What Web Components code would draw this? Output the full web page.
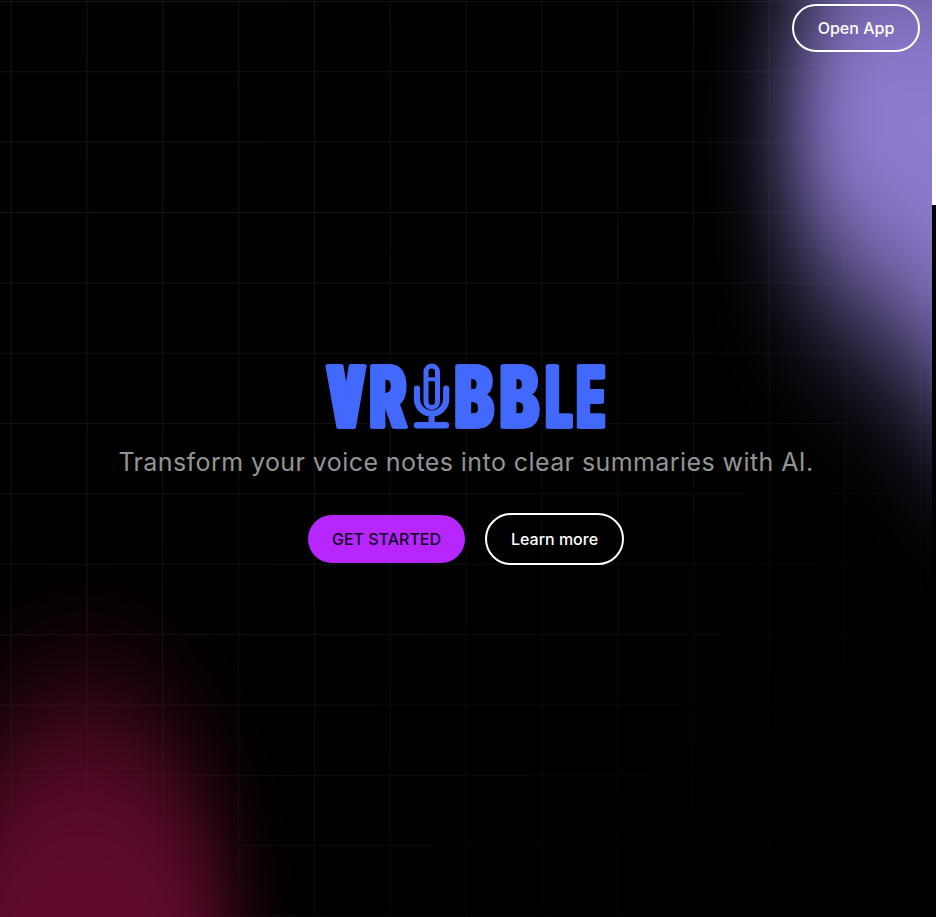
<!DOCTYPE html>
<html lang="en">
<head>
<meta charset="utf-8">
<title>Vribble</title>
<style>
html,body{margin:0;height:100%;background:#000;overflow:hidden}
body{font-family:Inter,"Liberation Sans",sans-serif;color:#fff}
</style>
</head>
<body>
<vribble-page></vribble-page>
<script>
const define=(name,html)=>customElements.define(name,class extends HTMLElement{
  constructor(){super();this.attachShadow({mode:"open"}).innerHTML=html;}
});

define("glow-backdrop",`
<style>:host{display:block;overflow:hidden}svg{display:block;width:100%;height:100%}</style>
<svg viewBox="0 0 932 917" preserveAspectRatio="none" aria-hidden="true">
  <defs>
    <pattern id="g" x="10.6" y="1" width="75.83" height="70.35" patternUnits="userSpaceOnUse">
      <path d="M.5 0V70.35M0 .5H75.83" stroke="#fff" stroke-opacity=".085" fill="none"/>
    </pattern>
    <linearGradient id="f" x1="0" y1="0" x2="932" y2="917" gradientUnits="userSpaceOnUse">
      <stop offset="0" stop-color="#fff"/><stop offset=".45" stop-color="#ccc"/><stop offset=".95" stop-color="#000"/>
    </linearGradient>
    <mask id="m" maskUnits="userSpaceOnUse" x="0" y="0" width="932" height="917"><rect width="932" height="917" fill="url(#f)"/></mask>
    <filter id="b1" filterUnits="userSpaceOnUse" x="500" y="-400" width="900" height="1400" color-interpolation-filters="sRGB"><feGaussianBlur stdDeviation="40 84"/></filter>
    <filter id="b2" filterUnits="userSpaceOnUse" x="-300" y="300" width="800" height="1300" color-interpolation-filters="sRGB"><feGaussianBlur stdDeviation="34 78"/></filter>
  </defs>
  <rect width="932" height="917" fill="#000"/>
  <rect width="932" height="917" fill="url(#g)" mask="url(#m)"/>
  <path d="M825-50L786 40L786 200Q796 260 850 298Q915 330 955 420L1060 460V-80H825Z" fill="#8e7bd0" filter="url(#b1)"/>
  <ellipse cx="84" cy="975" rx="152" ry="268" fill="#600a2b" filter="url(#b2)"/>
</svg>`);

define("vribble-logo",`
<style>:host{display:block;width:284px;height:68px}svg{display:block;margin-top:-22px;overflow:visible}text{font:800 84px Inter,"Liberation Sans",sans-serif;stroke-width:3;stroke-linejoin:round}</style>
<svg width="284" height="112" viewBox="0 -22 284 112" fill="#4269fb" stroke="#4269fb" role="img" aria-label="Vribble">
  <filter id="wide" filterUnits="userSpaceOnUse" x="-10" y="-22" width="304" height="112" color-interpolation-filters="sRGB">
    <feOffset in="SourceGraphic" dx="-2" result="a"/><feOffset in="SourceGraphic" dx="-1" result="b"/>
    <feOffset in="SourceGraphic" dx="1" result="c"/><feOffset in="SourceGraphic" dx="2" result="d"/>
    <feMerge><feMergeNode in="a"/><feMergeNode in="b"/><feMergeNode in="SourceGraphic"/><feMergeNode in="c"/><feMergeNode in="d"/></feMerge>
  </filter>
  <g filter="url(#wide)">
    <g filter="url(#wide)"><text transform="translate(5.3 64) scale(.52 1)">V</text></g>
    <text transform="translate(46 64) scale(.645 1)">R</text>
    <text transform="translate(131 64) scale(.685 1)" x="0 66">BB</text>
    <text transform="translate(222 64) scale(.54 1)" x="0 57.4">LE</text>
  </g>
  <g fill="none" stroke-width="5" stroke-linecap="round">
    <rect x="102" y="3" width="11.5" height="41.5" rx="5.75"/>
    <path d="M93 25.5V36A14.6 14.6 0 0 0 122.2 36V25.5M107.6 51V61" stroke-width="6.2"/>
    <path d="M93.2 62.2H121.8" stroke-width="6.6"/>
    <path d="M103 16.3H112" stroke-width="4"/>
  </g>
</svg>`);

define("pill-button",`
<style>
:host{display:block}
button{box-sizing:border-box;display:block;width:var(--w);height:var(--h);padding:0;border:2px solid #fff;border-radius:26px;background:transparent;color:#fff;font:500 16px/24px Inter,"Liberation Sans",sans-serif}
:host([filled]) button{border:0;background:#b725ff;color:#10031b}
</style><button><slot></slot></button>`);

define("hero-section",`
<style>
:host{display:flex;flex-direction:column;align-items:center;padding-top:311px}
p{margin:13px 0 0;font-size:25px;line-height:36px;letter-spacing:.42px;color:#949494;white-space:nowrap}
div{display:flex;align-items:center;gap:20px;margin-top:33px}
</style>
<vribble-logo></vribble-logo>
<p>Transform your voice notes into clear summaries with AI.</p>
<div><pill-button filled style="--w:157px;--h:48px">GET STARTED</pill-button><pill-button style="--w:139px;--h:52px">Learn more</pill-button></div>`);

define("scroll-rail",`
<style>:host{display:block;background:#000}i{display:block;height:205px;background:#fff}</style><i></i>`);

define("vribble-page",`
<style>
:host{display:grid;grid-template-columns:1fr 4px;height:100vh;overflow:hidden}
main,glow-backdrop{grid-column:1;grid-row:1;min-width:0;height:917px}
main{z-index:1}
scroll-rail{grid-column:2;grid-row:1}
header{display:flex;justify-content:flex-end;padding:4px 12px 0 0;height:48px}
</style>
<glow-backdrop></glow-backdrop>
<main><header><pill-button style="--w:128px;--h:48px">Open App</pill-button></header><hero-section></hero-section></main>
<scroll-rail></scroll-rail>`);
</script>
</body>
</html>
